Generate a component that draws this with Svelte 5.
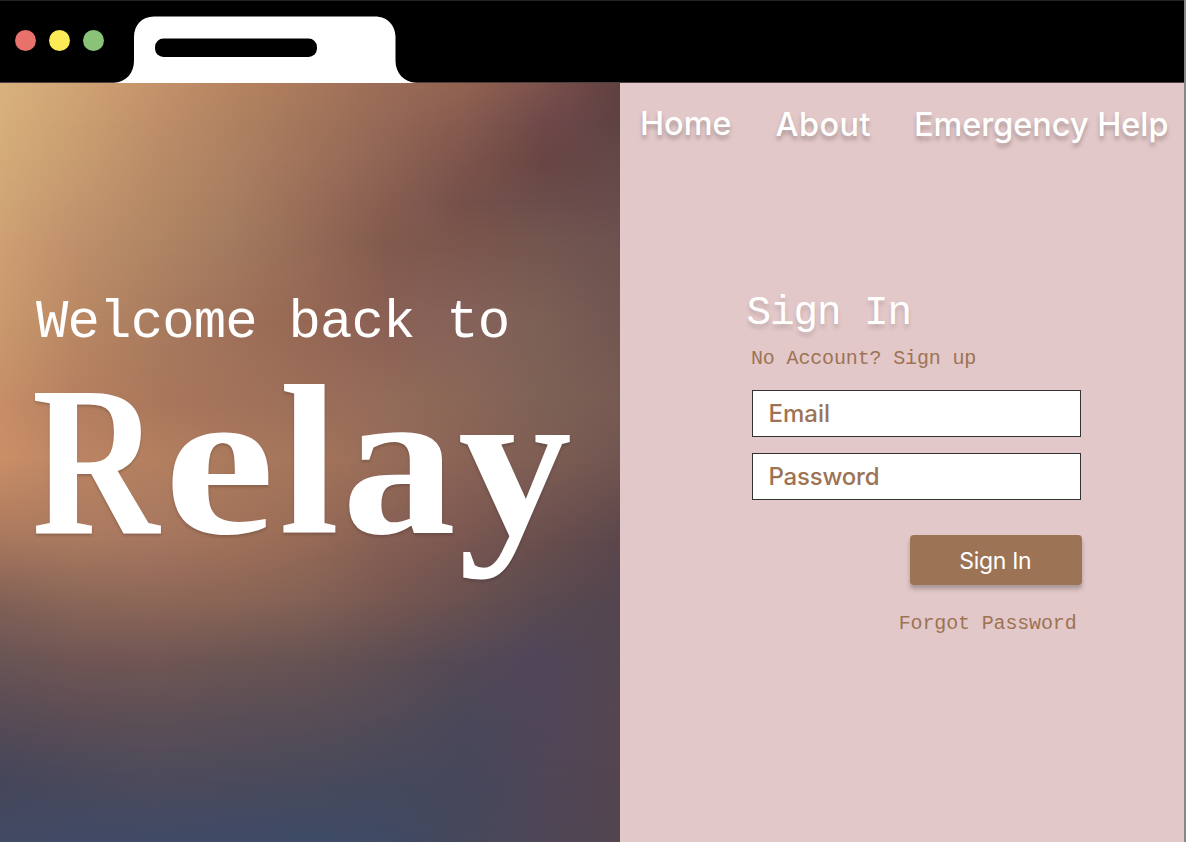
<script>
  // Colour mesh of the hero backdrop: each row is a horizontal gradient,
  // faded into the row above it.
  const mesh = [
    { y: 0, c: ['#d8b27e', '#d0a374', '#c4936b', '#b68460', '#a9785b', '#9a6c57', '#916351', '#7c524b', '#604041'] },
    { y: 38, c: ['#d6af7b', '#cc9f71', '#bf8f69', '#b08261', '#a2755a', '#956856', '#865b4f', '#70494a', '#5f4243'] },
    { y: 77, c: ['#d3ab78', '#c89c70', '#ba8c67', '#ad8062', '#9f725a', '#8e6454', '#7e544b', '#684543', '#644848'] },
    { y: 117, c: ['#d1a676', '#c4966e', '#b68965', '#a87e60', '#996d58', '#895e51', '#75504a', '#6c4d4a', '#684b4c'] },
    { y: 157, c: ['#cfa073', '#bf906b', '#b18664', '#a37b5f', '#956b56', '#825a4d', '#7a554c', '#74554f', '#6c524f'] },
    { y: 237, c: ['#c99a6e', '#b98863', '#a97c5f', '#9f715a', '#956754', '#8a6055', '#85625a', '#7d6056', '#715651'] },
    { y: 317, c: ['#c78e67', '#b57f60', '#aa775b', '#a3725a', '#9c6e59', '#946b59', '#8a6757', '#7e6156', '#775b53'] },
    { y: 377, c: ['#cb8f67', '#bb8464', '#b38060', '#ab7a5d', '#a5755b', '#966c59', '#8a6356', '#7e5e54', '#715550'] },
    { y: 457, c: ['#a8775d', '#aa7a5f', '#a67660', '#a17159', '#966a56', '#865f54', '#7a5751', '#694e4d', '#5c474c'] },
    { y: 517, c: ['#836156', '#8b6758', '#8e6757', '#8b6556', '#836155', '#775751', '#6a5150', '#5a4a50', '#54454f'] },
    { y: 577, c: ['#695455', '#705554', '#715654', '#6b5553', '#675353', '#5e4e53', '#544955', '#50465a', '#54464f'] },
    { y: 637, c: ['#574b55', '#5b4d55', '#5c4f56', '#594e56', '#574d56', '#524b57', '#4a4859', '#504659', '#574650'] },
    { y: 697, c: ['#45465a', '#49495b', '#4d4b5b', '#4b4a5b', '#494a5b', '#46495c', '#46475b', '#4f4657', '#54454f'] },
    { y: 760, c: ['#434a64', '#414a66', '#404a66', '#3f4a67', '#3d4b66', '#3f4a64', '#46485b', '#4e4657', '#53454f'] }
  ];
  const layers = mesh.map((row, i) => {
    const fade = i === 0
      ? 'none'
      : `linear-gradient(transparent ${mesh[i - 1].y}px, #000 ${row.y}px)`;
    return `background:linear-gradient(90deg,${row.c.join(',')});mask-image:${fade}`;
  });

  // Display lettering: advance width and horizontal stretch of each glyph.
  const wordmark = [
    { ch: 'R', w: 132.4, s: 0.82 },
    { ch: 'e', w: 114.8, s: 1.16 },
    { ch: 'l', w: 63.3, s: 1 },
    { ch: 'a', w: 116, s: 1.06 },
    { ch: 'y', w: 112, s: 1.06 }
  ];
</script>

<div class="window">
  <header class="chrome">
    <div class="dots"><i class="red"></i><i class="yellow"></i><i class="green"></i></div>
    <svg class="tab" width="302" height="67" viewBox="0 0 302 67">
      <path d="M0 67C12 66 20 57 20 45V21C20 9 28 .5 40 .5H261C273 .5 281.500 9 281.500 21V45C281.500 57 290 66 302 67Z" fill="#fff" />
      <rect x="41" y="22.500" width="162" height="18.500" rx="8.500" />
    </svg>
  </header>
  <main>
    <section class="hero">
      {#each layers as style}<div class="layer" {style}></div>{/each}
      <div class="copy">
        <p>Welcome back to</p>
        <h1>{#each wordmark as g}<span style="width:{g.w}px;transform:scaleX({g.s})">{g.ch}</span>{/each}</h1>
      </div>
    </section>
    <section class="panel">
      <nav><a class="home" href="#home">Home</a><a class="about" href="#about">About</a><a class="help" href="#help">Emergency Help</a></nav>
      <form>
        <h2>Sign In</h2>
        <a class="signup" href="#signup">No Account? Sign up</a>
        <input class="email" type="email" placeholder="Email" />
        <input class="password" type="password" placeholder="Password" />
        <button type="button">Sign In</button>
        <a class="forgot" href="#forgot">Forgot Password</a>
      </form>
    </section>
  </main>
</div>

<style>
  :global(body) { margin: 0; overflow: hidden; }
  * { box-sizing: border-box; }
  .window { width: 1186px; height: 842px; display: flex; flex-direction: column; border-right: 2px solid #8a8786; background: #e3c8c9; }
  .chrome { height: 83px; flex: none; background: #000; border-top: 1px solid #222; border-bottom: 1px solid #4a4040; display: flex; align-items: flex-end; }
  .dots { display: flex; gap: 12.700px; padding-left: 15.300px; width: 114px; height: 52px; flex: none; }
  .dots i { width: 21px; height: 21px; border-radius: 50%; flex: none; }
  .red { background: #e8716c; }
  .yellow { background: #fdea57; }
  .green { background: #8ac377; }
  .tab { display: block; flex: none; margin-bottom: -1px; }
  main { flex: 1; display: flex; }
  .hero { width: 619.500px; height: 759px; display: grid; grid-template: 100% / 100%; overflow: hidden; flex: none; }
  .layer, .copy { grid-area: 1 / 1; }
  .copy { z-index: 1; color: #fff; padding: 207px 0 0 36px; white-space: nowrap; }
  p { margin: 0; font: 54px/66px "Liberation Mono", monospace; letter-spacing: -.850px; }
  h1 { display: flex; margin: -15px 0 0 -4px; font: bold 215px/240px "Liberation Serif", serif; text-shadow: 0 2px 3px rgba(0, 0, 0, .18); }
  h1 span { display: block; flex: none; transform-origin: 0 50%; }
  .panel { flex: 1; background: #e3c8c9; display: flex; flex-direction: column; }
  nav { display: flex; padding: 20px 0 0 20.500px; height: 80px; white-space: nowrap; }
  nav a { font: 500 32.400px/42px Inter, sans-serif; color: #fff; text-decoration: none; text-shadow: 0 4px 4px rgba(0, 0, 0, .25); }
  .home { width: 135.500px; }
  .about { width: 138.500px; letter-spacing: .500px; padding-top: 1px; }
  .help { padding-top: 1px; }
  form { width: 330px; margin-left: 132px; margin-top: 122px; display: flex; flex-direction: column; }
  h2 { margin: 0 0 0 -5px; font: 41px/56px "Liberation Mono", monospace; letter-spacing: -1.100px; color: #fff; text-shadow: 0 4px 4px rgba(0, 0, 0, .15); }
  .signup, .forgot { font: 20px/24px "Liberation Mono", monospace; letter-spacing: -.150px; color: #9c7354; text-decoration: none; white-space: nowrap; }
  .signup { margin: 6px 0 18.500px -.500px; }
  input { width: 329.500px; height: 47px; border: 1px solid #333; border-radius: 0; background: #fff; padding: 0 16px; font: 500 24px/30px Inter, sans-serif; color: #9c7354; outline: none; margin: 0 0 16.500px; }
  .email { padding-top: 1px; }
  .password { letter-spacing: -.200px; }
  input::placeholder { color: #9c7354; opacity: 1; }
  button { align-self: flex-end; width: 171.500px; height: 50px; border: 0; border-radius: 4px; background: #9c7354; color: #fff; font: 400 23px/30px Inter, sans-serif; padding: 2px 1px 0 0; letter-spacing: -.300px; box-shadow: 0 4px 4px rgba(0, 0, 0, .25); margin-top: 18.500px; }
  .forgot { align-self: flex-end; margin: 27px 5px 0 0; }
</style>
